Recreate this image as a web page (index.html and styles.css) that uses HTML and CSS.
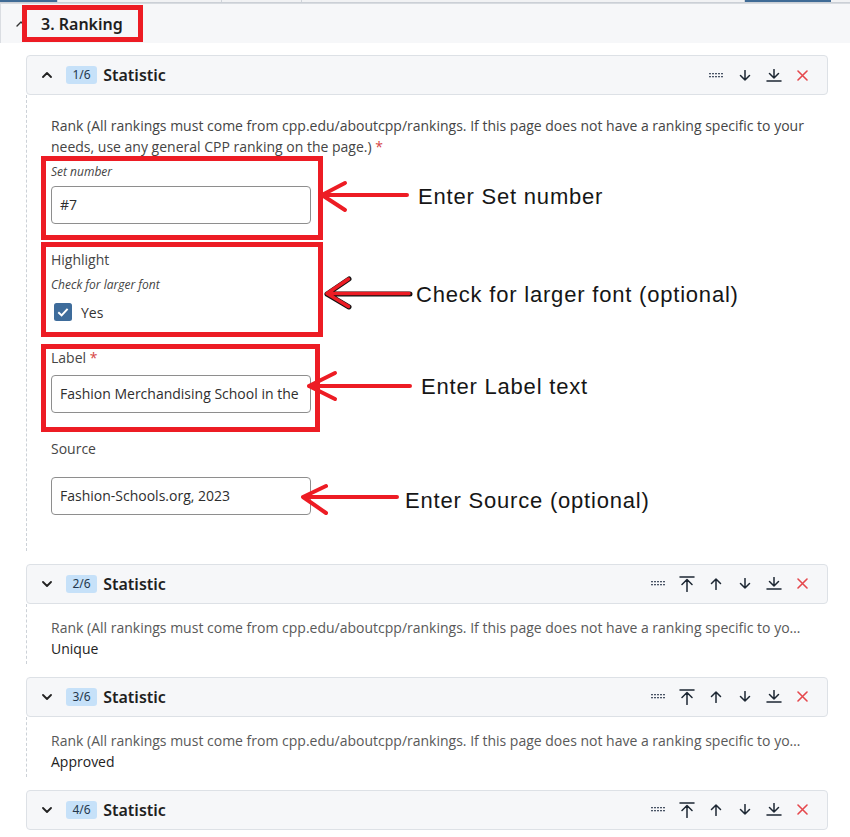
FILE: index.html
```html
<!DOCTYPE html>
<html>
<head>
<meta charset="utf-8">
<link rel="stylesheet" href="styles.css">
</head>
<body>
<div class="page">
  <div class="tabs">
    <div class="tab tab-a"></div>
    <div class="tab tab-b"></div>
    <div class="tab tab-c"></div>
    <div class="tab tab-d"></div>
    <div class="tab tab-e"></div>
    <div class="tab tab-f"></div>
  </div>
  <div class="tabline"></div>

  <section class="section">
    <div class="section-head">
      <svg class="chev chev-section" width="10" height="6" viewBox="0 0 10 6"><path d="M1 5 L5 1 L9 5" /></svg>
      <span class="section-title">3. Ranking</span>
    </div>

    <div class="section-body">
      <div class="card">
        <div class="card-head">
          <svg class="chev" width="10" height="6" viewBox="0 0 10 6"><path d="M1 5 L5 1 L9 5" /></svg>
          <span class="badge">1/6</span>
          <span class="card-title">Statistic</span>
          <div class="actions">
            <span class="act"><svg width="14" height="5" viewBox="0 0 14 5" class="dots"><rect x="0" y="0" width="2" height="1.3"/><rect x="3" y="0" width="2" height="1.3"/><rect x="6" y="0" width="2" height="1.3"/><rect x="9" y="0" width="2" height="1.3"/><rect x="12" y="0" width="2" height="1.3"/><rect x="0" y="3" width="2" height="1.3"/><rect x="3" y="3" width="2" height="1.3"/><rect x="6" y="3" width="2" height="1.3"/><rect x="9" y="3" width="2" height="1.3"/><rect x="12" y="3" width="2" height="1.3"/></svg></span>
            <span class="act"><svg class="ico" width="12" height="11" viewBox="0 0 12 11"><path d="M6 0.5 V10 M1.5 5.5 L6 10 L10.5 5.5"/></svg></span>
            <span class="act"><svg class="ico" width="16" height="13" viewBox="0 0 16 13"><path d="M8 0.5 V9 M3.5 4.5 L8 9 L12.5 4.5 M1 12 H15"/></svg></span>
            <span class="act"><svg class="ico del" width="11" height="11" viewBox="0 0 11 11"><path d="M1 1 L10 10 M10 1 L1 10"/></svg></span>
          </div>
        </div>
        <div class="card-body">
          <div class="field-label">Rank (All rankings must come from cpp.edu/aboutcpp/rankings. If this page does not have a ranking specific to your needs, use any general CPP ranking on the page.) <span class="req">*</span></div>
          <div class="hint">Set number</div>
          <div class="input input-first">#7</div>

          <div class="field-label group">Highlight</div>
          <div class="hint">Check for larger font</div>
          <div class="check-row">
            <svg width="18" height="18" viewBox="0 0 18 18"><rect x="0" y="0" width="18" height="18" rx="2.5" fill="#3e6c9b"/><path d="M4.3 9.3 L7.6 12.4 L13.6 5.8" stroke="#fff" stroke-width="2" fill="none"/></svg>
            <span class="check-text">Yes</span>
          </div>

          <div class="field-label group">Label <span class="req">*</span></div>
          <div class="input input-first">Fashion Merchandising School in the</div>

          <div class="field-label group">Source</div>
          <div class="input input-source">Fashion-Schools.org, 2023</div>
        </div>
      </div>

      <div class="card">
        <div class="card-head">
          <svg class="chev" width="10" height="6" viewBox="0 0 10 6"><path d="M1 1 L5 5 L9 1" /></svg>
          <span class="badge">2/6</span>
          <span class="card-title">Statistic</span>
          <div class="actions">
            <span class="act"><svg width="14" height="5" viewBox="0 0 14 5" class="dots"><rect x="0" y="0" width="2" height="1.3"/><rect x="3" y="0" width="2" height="1.3"/><rect x="6" y="0" width="2" height="1.3"/><rect x="9" y="0" width="2" height="1.3"/><rect x="12" y="0" width="2" height="1.3"/><rect x="0" y="3" width="2" height="1.3"/><rect x="3" y="3" width="2" height="1.3"/><rect x="6" y="3" width="2" height="1.3"/><rect x="9" y="3" width="2" height="1.3"/><rect x="12" y="3" width="2" height="1.3"/></svg></span>
            <span class="act"><svg class="ico" width="16" height="16" viewBox="0 0 16 16"><path d="M1 1 H15 M8 3.5 V15.5 M3 8.5 L8 3.5 L13 8.5"/></svg></span>
            <span class="act"><svg class="ico" width="12" height="12" viewBox="0 0 12 12"><path d="M6 11.5 V1 M1.5 5.5 L6 1 L10.5 5.5"/></svg></span>
            <span class="act"><svg class="ico" width="12" height="11" viewBox="0 0 12 11"><path d="M6 0.5 V10 M1.5 5.5 L6 10 L10.5 5.5"/></svg></span>
            <span class="act"><svg class="ico" width="16" height="13" viewBox="0 0 16 13"><path d="M8 0.5 V9 M3.5 4.5 L8 9 L12.5 4.5 M1 12 H15"/></svg></span>
            <span class="act"><svg class="ico del" width="11" height="11" viewBox="0 0 11 11"><path d="M1 1 L10 10 M10 1 L1 10"/></svg></span>
          </div>
        </div>
        <div class="card-body collapsed">
          <div class="summary">Rank (All rankings must come from cpp.edu/aboutcpp/rankings. If this page does not have a ranking specific to your needs, use any general CPP ranking on the page.)</div>
          <div class="value">Unique</div>
        </div>
      </div>

      <div class="card">
        <div class="card-head">
          <svg class="chev" width="10" height="6" viewBox="0 0 10 6"><path d="M1 1 L5 5 L9 1" /></svg>
          <span class="badge">3/6</span>
          <span class="card-title">Statistic</span>
          <div class="actions">
            <span class="act"><svg width="14" height="5" viewBox="0 0 14 5" class="dots"><rect x="0" y="0" width="2" height="1.3"/><rect x="3" y="0" width="2" height="1.3"/><rect x="6" y="0" width="2" height="1.3"/><rect x="9" y="0" width="2" height="1.3"/><rect x="12" y="0" width="2" height="1.3"/><rect x="0" y="3" width="2" height="1.3"/><rect x="3" y="3" width="2" height="1.3"/><rect x="6" y="3" width="2" height="1.3"/><rect x="9" y="3" width="2" height="1.3"/><rect x="12" y="3" width="2" height="1.3"/></svg></span>
            <span class="act"><svg class="ico" width="16" height="16" viewBox="0 0 16 16"><path d="M1 1 H15 M8 3.5 V15.5 M3 8.5 L8 3.5 L13 8.5"/></svg></span>
            <span class="act"><svg class="ico" width="12" height="12" viewBox="0 0 12 12"><path d="M6 11.5 V1 M1.5 5.5 L6 1 L10.5 5.5"/></svg></span>
            <span class="act"><svg class="ico" width="12" height="11" viewBox="0 0 12 11"><path d="M6 0.5 V10 M1.5 5.5 L6 10 L10.5 5.5"/></svg></span>
            <span class="act"><svg class="ico" width="16" height="13" viewBox="0 0 16 13"><path d="M8 0.5 V9 M3.5 4.5 L8 9 L12.5 4.5 M1 12 H15"/></svg></span>
            <span class="act"><svg class="ico del" width="11" height="11" viewBox="0 0 11 11"><path d="M1 1 L10 10 M10 1 L1 10"/></svg></span>
          </div>
        </div>
        <div class="card-body collapsed">
          <div class="summary">Rank (All rankings must come from cpp.edu/aboutcpp/rankings. If this page does not have a ranking specific to your needs, use any general CPP ranking on the page.)</div>
          <div class="value">Approved</div>
        </div>
      </div>

      <div class="card">
        <div class="card-head">
          <svg class="chev" width="10" height="6" viewBox="0 0 10 6"><path d="M1 1 L5 5 L9 1" /></svg>
          <span class="badge">4/6</span>
          <span class="card-title">Statistic</span>
          <div class="actions">
            <span class="act"><svg width="14" height="5" viewBox="0 0 14 5" class="dots"><rect x="0" y="0" width="2" height="1.3"/><rect x="3" y="0" width="2" height="1.3"/><rect x="6" y="0" width="2" height="1.3"/><rect x="9" y="0" width="2" height="1.3"/><rect x="12" y="0" width="2" height="1.3"/><rect x="0" y="3" width="2" height="1.3"/><rect x="3" y="3" width="2" height="1.3"/><rect x="6" y="3" width="2" height="1.3"/><rect x="9" y="3" width="2" height="1.3"/><rect x="12" y="3" width="2" height="1.3"/></svg></span>
            <span class="act"><svg class="ico" width="16" height="16" viewBox="0 0 16 16"><path d="M1 1 H15 M8 3.5 V15.5 M3 8.5 L8 3.5 L13 8.5"/></svg></span>
            <span class="act"><svg class="ico" width="12" height="12" viewBox="0 0 12 12"><path d="M6 11.5 V1 M1.5 5.5 L6 1 L10.5 5.5"/></svg></span>
            <span class="act"><svg class="ico" width="12" height="11" viewBox="0 0 12 11"><path d="M6 0.5 V10 M1.5 5.5 L6 10 L10.5 5.5"/></svg></span>
            <span class="act"><svg class="ico" width="16" height="13" viewBox="0 0 16 13"><path d="M8 0.5 V9 M3.5 4.5 L8 9 L12.5 4.5 M1 12 H15"/></svg></span>
            <span class="act"><svg class="ico del" width="11" height="11" viewBox="0 0 11 11"><path d="M1 1 L10 10 M10 1 L1 10"/></svg></span>
          </div>
        </div>
      </div>
    </div>
  </section>

  <!-- annotation overlay -->
  <div class="mark mark-title"></div>
  <div class="mark mark-set"></div>
  <div class="mark mark-high"></div>
  <div class="mark mark-label"></div>

  <svg class="arrows" width="850" height="837" viewBox="0 0 850 837">
    <g class="arrow-red">
      <path d="M322 195 H407 M322 195 L345 183 M322 195 L345 210"/>
    </g>
    <g class="arrow-black">
      <path d="M327 294 H410 M327 294 L349 279 M327 294 L349 307"/>
    </g>
    <g class="arrow-red thin">
      <path d="M327 293.5 H409 M327 293.5 L348.5 279 M327 293.5 L348.5 306.5"/>
    </g>
    <g class="arrow-red">
      <path d="M309 386 H410 M309 386 L335 373 M309 386 L335 399"/>
      <path d="M303 497 H397 M303 497 L326 486 M303 497 L326 513"/>
    </g>
  </svg>

  <div class="note note-set">Enter Set number</div>
  <div class="note note-high">Check for larger font (optional)</div>
  <div class="note note-label">Enter Label text</div>
  <div class="note note-source">Enter Source (optional)</div>
</div>
</body>
</html>
```

FILE: styles.css
```css
* { box-sizing: border-box; }

body {
  margin: 0;
  background: #ffffff;
  font-family: "Open Sans", "Noto Sans", sans-serif;
  color: #444;
}

.page {
  position: relative;
  width: 850px;
  height: 837px;
  overflow: hidden;
}

/* top tab strip */
.tabs {
  display: flex;
  height: 2px;
  background: #f1f2f4;
}
.tab { border-right: 1px solid #cfd4da; }
.tab-a { width: 58px; background: #3f6b96; }
.tab-b { width: 164px; }
.tab-c { width: 80px; }
.tab-d { width: 443px; }
.tab-e { width: 86px; background: #3f6b96; border-right: 0; }
.tab-f { flex: 1; border-right: 0; }
.tabline {
  height: 2px;
  background: linear-gradient(#c5cad1, #dde1e5);
}

/* section */
.section-head {
  height: 39px;
  background: #f6f7f9;
  border-left: 1px solid #dadde2;
  display: flex;
  align-items: center;
  padding-left: 15px;
}
.chev path {
  fill: none;
  stroke: #222;
  stroke-width: 1.8;
  stroke-linecap: round;
  stroke-linejoin: round;
}
.chev-section path {
  stroke: #333;
  stroke-width: 1.4;
}
.section-title {
  font-family: "Noto Sans", sans-serif;
  font-weight: 600;
  font-size: 16px;
  color: #1f1f1f;
  margin-left: 15px;
}
.section-body {
  padding: 12px 22px 0 26px;
  display: flex;
  flex-direction: column;
  gap: 13px;
}

/* cards */
.card-head {
  height: 40px;
  background: #f6f7f9;
  border: 1px solid #dde1e6;
  border-radius: 4px;
  display: flex;
  align-items: center;
  padding: 0 10px 0 15px;
}
.badge {
  margin-left: 14px;
  height: 18px;
  line-height: 18px;
  padding: 0 6.5px;
  border-radius: 3px;
  background: #c6e1f9;
  color: #24384d;
  font-family: "Noto Sans", sans-serif;
  font-size: 12px;
}
.card-title {
  margin-left: 6px;
  font-family: "Noto Sans", sans-serif;
  font-weight: 600;
  font-size: 16px;
  color: #1f1f1f;
}
.actions {
  margin-left: auto;
  display: flex;
}
.act {
  width: 29px;
  height: 28px;
  display: flex;
  align-items: center;
  justify-content: center;
}
.dots rect { fill: #4a5566; }
.ico path {
  fill: none;
  stroke: #1d2733;
  stroke-width: 1.5;
  stroke-linecap: round;
  stroke-linejoin: round;
}
.ico.del path {
  stroke: #e5484d;
  stroke-width: 1.6;
}

.card-body {
  border-left: 1px dashed #ccd1d7;
  padding: 19.5px 24px 36px 24px;
  font-size: 14px;
  line-height: 21px;
}
.card-body.collapsed {
  padding: 13.5px 24px 4.5px 24px;
}

.field-label {
  font-size: 14px;
  line-height: 21px;
  color: #454545;
}
.field-label.group { margin-top: 25.5px; }
.req { color: #d64545; }
.hint {
  margin-top: 7px;
  font-size: 12px;
  line-height: 15px;
  font-style: italic;
  color: #444;
}
.input {
  width: 260px;
  height: 38px;
  border: 1px solid #8e8e8e;
  border-radius: 4px;
  padding: 0 8px;
  display: flex;
  align-items: center;
  font-size: 14px;
  color: #2e2e2e;
  white-space: nowrap;
  overflow: hidden;
}
.input-first { margin-top: 7px; }
.input-source { margin-top: 17.5px; }

.check-row {
  margin-top: 11px;
  height: 18px;
  display: flex;
  align-items: center;
  padding-left: 3px;
}
.check-text {
  margin-left: 9px;
  color: #333;
}

.summary {
  color: #595959;
  white-space: nowrap;
  overflow: hidden;
  text-overflow: ellipsis;
}
.value { color: #222; }

/* annotation overlay */
.mark {
  position: absolute;
  border: 5px solid #ed1c24;
}
.mark-title { left: 22px; top: 5px; width: 121px; height: 37px; }
.mark-set { left: 41px; top: 156px; width: 282px; height: 84px; }
.mark-high { left: 41px; top: 242px; width: 282px; height: 95px; }
.mark-label { left: 41px; top: 344px; width: 279px; height: 88px; }

.arrows {
  position: absolute;
  left: 0;
  top: 0;
}
.arrow-red path,
.arrow-black path {
  fill: none;
  stroke-linecap: round;
  stroke-linejoin: round;
}
.arrow-red path { stroke: #ed1c24; stroke-width: 4; }
.arrow-black path { stroke: #111; stroke-width: 5; }
.arrow-red.thin path { stroke-width: 3.5; }

.note {
  position: absolute;
  font-family: "Liberation Sans", Arial, sans-serif;
  font-size: 22px;
  line-height: 22px;
  letter-spacing: 0.8px;
  color: #161616;
  white-space: nowrap;
}
.note-set { left: 418px; top: 186px; }
.note-high { left: 416px; top: 284px; }
.note-label { left: 421px; top: 376px; }
.note-source { left: 405px; top: 490px; }
```
